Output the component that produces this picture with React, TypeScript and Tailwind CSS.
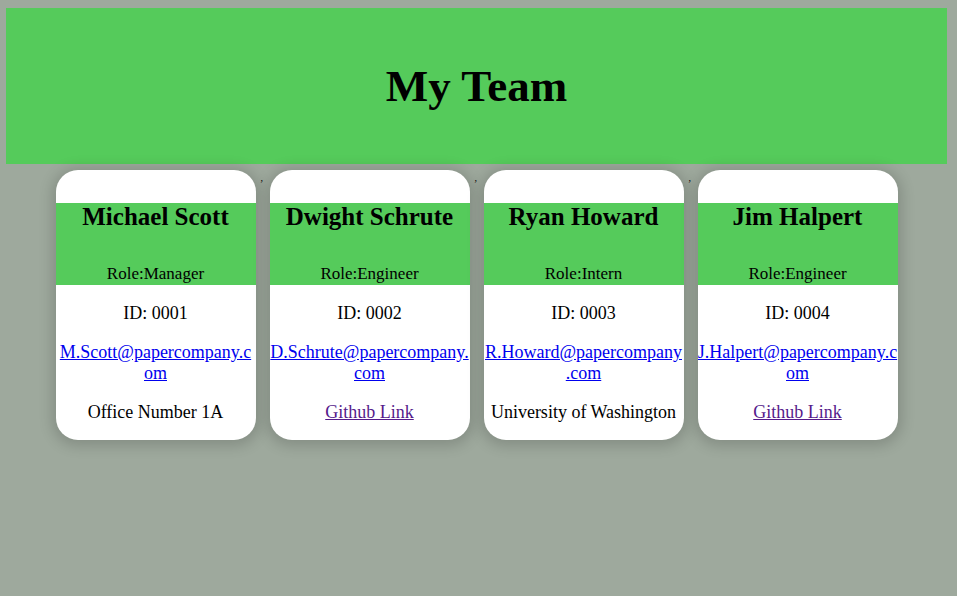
const team = [
  { name: "Michael Scott", role: "Manager", id: "0001", email: "M.Scott@papercompany.com", cut: 22, extra: "Office Number 1A", link: false },
  { name: "Dwight Schrute", role: "Engineer", id: "0002", email: "D.Schrute@papercompany.com", cut: 23, extra: "Github Link", link: true },
  { name: "Ryan Howard", role: "Intern", id: "0003", email: "R.Howard@papercompany.com", cut: 21, extra: "University of Washington", link: false },
  { name: "Jim Halpert", role: "Engineer", id: "0004", email: "J.Halpert@papercompany.com", cut: 24, extra: "Github Link", link: true },
];

type Member = (typeof team)[number];

function Card({ m }: { m: Member }) {
  return (
    <div className="w-[200px] h-[270px] shrink-0 rounded-[22px] bg-white pt-[33px] text-center text-black shadow-[0_2px_14px_4px_rgba(0,0,0,0.16)] overflow-hidden">
      <div className="h-[82px] bg-[#55cb5b] flex flex-col">
        <h2 className="text-[25px] font-bold leading-[28px] whitespace-nowrap">{m.name}</h2>
        <p className="mt-auto mb-[1px] text-[17px] leading-[20px]">Role:{m.role}</p>
      </div>
      <div className="pt-[18px] text-[18px]">
        <p className="leading-[20px]">ID: {m.id}</p>
        <p className="mt-[19px] leading-[21px] whitespace-nowrap -mx-[4px]">
          <a href="#" className="text-[#0000ee] underline">
            {m.email.slice(0, m.cut)}
            <br />
            {m.email.slice(m.cut)}
          </a>
        </p>
        <p className="mt-[18px] leading-[20px] whitespace-nowrap">
          {m.link ? <a href="#" className="text-[#551a8b] underline">{m.extra}</a> : m.extra}
        </p>
      </div>
    </div>
  );
}

export default function App() {
  return (
    <div className="min-h-[596px] w-full bg-[#9ea99d] pt-[8px] pl-[6px] pr-[10px] font-['Liberation_Serif',serif]">
      <header className="h-[156px] bg-[#55cb5b] flex items-center justify-center">
        <h1 className="text-[45px] font-bold leading-none text-black">My Team</h1>
      </header>
      <div className="mt-[6px] flex justify-center items-start">
        {team.map((m, i) => (
          <div key={m.id} className="flex items-start">
            <Card m={m} />
            {i < team.length - 1 && (
              <span className="w-[14px] pl-[5px] pt-[3px] text-[10px] leading-none text-black">,</span>
            )}
          </div>
        ))}
      </div>
    </div>
  );
}
